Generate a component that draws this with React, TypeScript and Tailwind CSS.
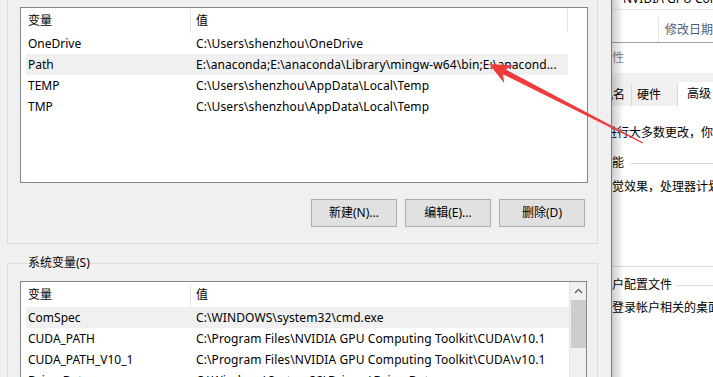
const font = "font-['Noto_Sans','Noto_Sans_CJK_SC',sans-serif]"

type Row = { name: string; value: string; selected?: boolean }

const userVars: Row[] = [
  { name: 'OneDrive', value: 'C:\\Users\\shenzhou\\OneDrive' },
  { name: 'Path', value: 'E:\\anaconda;E:\\anaconda\\Library\\mingw-w64\\bin;E:\\anacond...', selected: true },
  { name: 'TEMP', value: 'C:\\Users\\shenzhou\\AppData\\Local\\Temp' },
  { name: 'TMP', value: 'C:\\Users\\shenzhou\\AppData\\Local\\Temp' },
]

const sysVars: Row[] = [
  { name: 'ComSpec', value: 'C:\\WINDOWS\\system32\\cmd.exe', selected: true },
  { name: 'CUDA_PATH', value: 'C:\\Program Files\\NVIDIA GPU Computing Toolkit\\CUDA\\v10.1' },
  { name: 'CUDA_PATH_V10_1', value: 'C:\\Program Files\\NVIDIA GPU Computing Toolkit\\CUDA\\v10.1' },
  { name: 'DriverData', value: 'C:\\Windows\\System32\\Drivers\\DriverData' },
]

function ListHeader() {
  return (
    <div className="flex h-[25px] items-center">
      <div className="w-[169px] pl-[7px]">变量</div>
      <div className="h-[24px] w-px bg-[#e5e5e5]" />
      <div className="flex-1 pl-[5px]">值</div>
    </div>
  )
}

function ListRows({ rows }: { rows: Row[] }) {
  return (
    <div className="pl-[5px]">
      {rows.map((r) => (
        <div
          key={r.name}
          className={`flex h-[21px] items-center whitespace-nowrap ${r.selected ? 'bg-[#f0f0f0]' : ''}`}
        >
          <div className="w-[170px] shrink-0 pl-[2px]">{r.name}</div>
          <div className="tracking-[0.1px]">{r.value}</div>
        </div>
      ))}
    </div>
  )
}

function Button({ label }: { label: string }) {
  return (
    <div className="flex h-[28px] w-[86px] items-center justify-center border border-[#adadad] bg-[#e1e1e1]">
      {label}
    </div>
  )
}

function Arrow() {
  return (
    <svg className="pointer-events-none absolute left-0 top-0" width="713" height="377">
      <polygon
        fill="#ef3b3b"
        points="489,64 513.5,65.5 505.8,69.6 643.3,142.5 642.7,143.5 503,74.2 504.2,83"
      />
    </svg>
  )
}

export default function App() {
  return (
    <div className={`relative flex h-[377px] w-[713px] overflow-hidden bg-[#f0f0f0] text-[12px] leading-[16px] text-black ${font}`}>
      {/* environment variables dialog */}
      <div className="w-[611px] shrink-0 pl-[7px]">
        <div className="h-[244px] w-[591px] border-x border-b border-[#dcdcdc] pl-[12px] pt-[7px]">
          <div className="flex h-[176px] w-[568px] flex-col border border-[#828790] bg-white">
            <div className="w-[547px]">
              <div className="flex">
                <div className="flex-1">
                  <ListHeader />
                </div>
                <div className="h-[24px] w-px bg-[#e5e5e5]" />
              </div>
              <ListRows rows={userVars} />
            </div>
          </div>
          <div className="mt-[16px] flex gap-[8px] pl-[291px]">
            <Button label="新建(N)..." />
            <Button label="编辑(E)..." />
            <Button label="删除(D)" />
          </div>
        </div>

        <fieldset className="mt-[11px] h-[200px] w-[591px] border border-[#dcdcdc] pl-[12px]">
          <legend className="ml-[7px] px-[1px] leading-[16px]">系统变量(S)</legend>
          <div className="mt-[10px] flex h-[150px] w-[567px] border border-[#828790] bg-white">
            <div className="flex-1">
              <ListHeader />
              <ListRows rows={sysVars} />
            </div>
            <div className="flex w-[17px] flex-col border-l border-[#e5e5e5] bg-[#f0f0f0]">
              <div className="flex h-[17px] items-center justify-center bg-[#f0f0f0]">
                <svg width="9" height="6" viewBox="0 0 9 6">
                  <path d="M1 5 L4.5 1.5 L8 5" stroke="#606060" strokeWidth="1.4" fill="none" />
                </svg>
              </div>
              <div className="ml-px mt-[1px] h-[48px] w-[15px] bg-[#cdcdcd]" />
            </div>
          </div>
        </fieldset>
      </div>

      {/* window behind */}
      <div className="relative flex-1 overflow-hidden border-l border-[#7a7a7a] bg-white">
        <div className="h-[10px] overflow-hidden border-b border-[#e5e5e5]">
          <div className="-mt-[8px] ml-[11px] whitespace-nowrap leading-[14px]">NVIDIA GPU Computing</div>
        </div>
        <div className="flex h-[33px] border-b border-[#a0a0a0]">
          <div className="w-[56px]" />
          <div className="mt-[7px] flex items-center whitespace-nowrap border-l border-[#e5e5e5] pl-[6px] text-[#4c607a]">
            修改日期
          </div>
        </div>
        <div className="flex h-[30px] items-center whitespace-nowrap text-[#8a8a8a]">
          <span className="-ml-[12px]">属性</span>
        </div>
        <div className="flex h-[33px] items-end whitespace-nowrap bg-[#f0f0f0]">
          <div className="flex h-[22px] w-[20px] shrink-0 items-center justify-end border-r border-[#d9d9d9] pr-[6px]">
            <span>机名</span>
          </div>
          <div className="flex h-[22px] w-[46px] shrink-0 items-center border-r border-[#d9d9d9] pl-[5px]">硬件</div>
          <div className="flex h-[24px] flex-1 items-center bg-white pl-[9px]">高级</div>
        </div>
        <div className="whitespace-nowrap bg-white">
          <div className="-ml-[7px] mt-[19px] h-[16px]">进行大多数更改，你必须</div>
          <div className="mt-[14px] flex h-[16px] items-center">
            <span className="-ml-[12px]">性能</span>
            <div className="ml-[6px] h-px flex-1 bg-[#dcdcdc]" />
          </div>
          <div className="-ml-[12px] mt-[8px] h-[16px]">视觉效果，处理器计划，内存</div>
          <div className="mt-[71px] h-px bg-[#dcdcdc]" />
          <div className="mt-[10px] flex h-[16px] items-center">
            <span className="-ml-[12px]">用户配置文件</span>
            <div className="ml-[4px] h-px flex-1 bg-[#dcdcdc]" />
          </div>
          <div className="mt-[7px] h-[16px]">登录帐户相关的桌面设置</div>
        </div>
        <div className="pointer-events-none absolute left-0 top-0 h-full w-[12px] bg-gradient-to-r from-[#00000033] to-transparent" />
      </div>

      <Arrow />
    </div>
  )
}
